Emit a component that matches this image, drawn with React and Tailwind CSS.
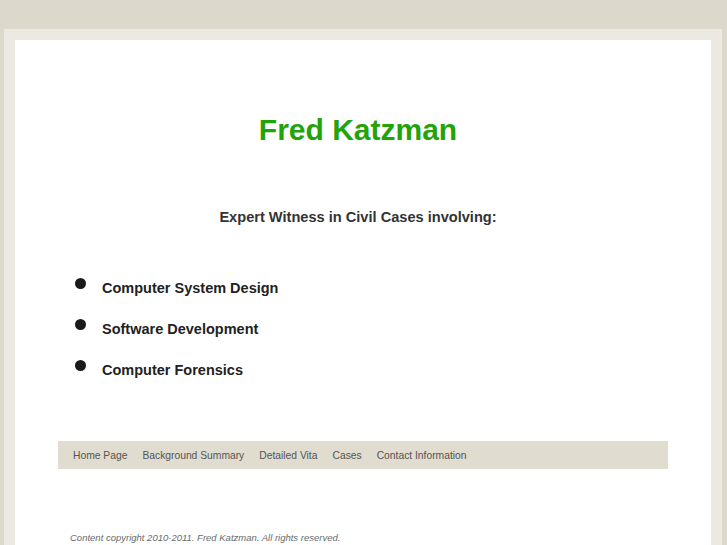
export default function App() {
  const items = ["Computer System Design", "Software Development", "Computer Forensics"];
  const links = ["Home Page", "Background Summary", "Detailed Vita", "Cases", "Contact Information"];

  return (
    <div className="min-h-screen bg-[#dcd8cb] pt-[29px] pl-[4px] pr-[4px] overflow-hidden" style={{ fontFamily: '"Liberation Sans", Arial, sans-serif' }}>
      <div className="bg-[#ece9e2] pt-[11px] px-[11px] mr-px">
        <div className="bg-white h-[520px] px-[43px]">
          {/* Header */}
          <h1 className="pt-[72px] text-center text-[30px] leading-[36px] font-bold text-[#22a30a] pr-[10px]">
            Fred Katzman
          </h1>

          <p className="mt-[60px] text-center text-[14.6px] leading-[18px] font-bold text-[#333] pr-[10px]">
            Expert Witness in Civil Cases involving:
          </p>

          {/* List */}
          <ul className="mt-[53px] pl-[17px] flex flex-col gap-[23px]">
            {items.map((item) => (
              <li key={item} className="flex items-center text-[14.5px] leading-[18px] font-bold text-[#222]">
                <span className="w-[11px] h-[11px] rounded-full bg-[#1a1a1a] mr-[16px] -mt-[10px]"></span>
                {item}
              </li>
            ))}
          </ul>

          {/* Nav */}
          <nav className="mt-[62px] bg-[#e0dccf] h-[28px] flex items-center pl-[15px] pt-[2px] gap-[15px]">
            {links.map((l) => (
              <a key={l} className="text-[10.3px] text-[#555]">
                {l}
              </a>
            ))}
          </nav>

          <p className="mt-[62px] pl-[12px] text-[9.5px] italic text-[#6a6a6a]">
            Content copyright 2010-2011. Fred Katzman. All rights reserved.
          </p>
        </div>
      </div>
    </div>
  );
}
